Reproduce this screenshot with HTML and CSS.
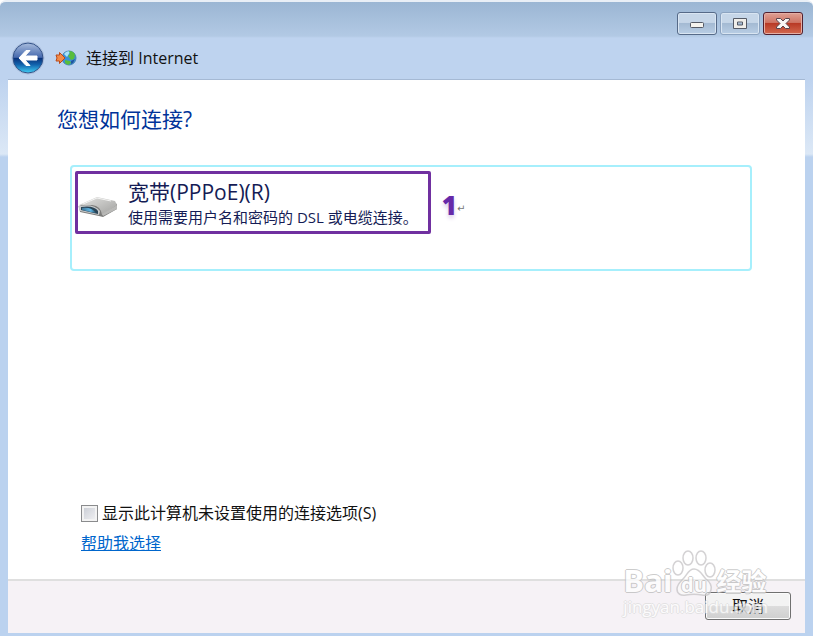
FILE: index.html
```html
<!DOCTYPE html>
<html lang="zh-CN">
<head>
	<meta charset="utf-8">
	<meta name="viewport" content="width=device-width, initial-scale=1">
	<title>连接到 Internet</title>
	<link rel="stylesheet" href="styles.css">
</head>
<body>
	<div class="window">
		<div class="titlebar">
			<button type="button" class="caption" aria-label="最小化">
				<svg width="16" height="14" viewBox="0 0 16 14"><rect x="1.5" y="5.500" width="13" height="5" rx="1" fill="#f5f3ee" stroke="#555a66"/></svg>
			</button>
			<button type="button" class="caption dim" aria-label="最大化">
				<svg width="16" height="14" viewBox="0 0 16 14"><path fill="#f0eeea" fill-rule="evenodd" stroke="#555a66" d="M1.500 1.500h13v10h-13zM5.500 5v3h5v-3z"/></svg>
			</button>
			<button type="button" class="caption close" aria-label="关闭">
				<svg width="16" height="14" viewBox="0 0 16 14"><path fill="#f8f6f4" stroke="#59444c" stroke-linejoin="round" d="M1.500 1.500h4L8 4l2.500-2.500h4V3L11 6.500l3.500 3.500v1.500h-4L8 9l-2.500 2.500h-4V10L5 6.500 1.500 3z"/></svg>
			</button>
		</div>

		<div class="header">
			<button type="button" class="back" aria-label="后退">
				<svg width="34" height="34" viewBox="0 0 34 34">
					<defs>
						<linearGradient id="ball" x1="0" y1="0" x2="0" y2="1">
							<stop offset="0" stop-color="#a9bddd"/>
							<stop offset=".48" stop-color="#4669ae"/>
							<stop offset=".5" stop-color="#092f78"/>
							<stop offset=".72" stop-color="#1263ad"/>
							<stop offset="1" stop-color="#43d0f5"/>
						</linearGradient>
					</defs>
					<circle cx="17" cy="17" r="16" fill="#dce6f4" stroke="#a5badb"/>
					<circle cx="17" cy="17" r="15" fill="url(#ball)" stroke="#315187"/>
					<path fill="#fff" stroke="#fff" stroke-linejoin="round" d="M8 17l7-7.500h4L14 15h12v4H14l5 5.500h-4z"/>
				</svg>
			</button>
			<svg class="globe" width="22" height="18" viewBox="0 0 22 18">
				<circle cx="14" cy="9" r="7" fill="#3b91d6" stroke="#4484b0"/>
				<path fill="#a9e3f8" d="M9 5q3-4 6-2l-3 5z"/>
				<path fill="#58bd3c" d="M14 2q5 0 6 4l-1 4-3 1-3-4 2-2zM10 11l5 1 1 2-3 2-3-2z"/>
				<path fill="#2255a0" d="M16 12l4-2-2 4-2 1z"/>
				<path fill="#f28a48" stroke="#b94a1b" stroke-linejoin="round" d="M1 6h3.500V3.500L10 9l-5.500 5.500V12H1l1-3z"/>
			</svg>
			<span class="caption-text">连接到 Internet</span>
		</div>

		<main class="content">
			<h1>您想如何连接?</h1>
			<div class="choice">
				<button type="button" class="option">
					<svg class="modem" width="40" height="24" viewBox="0 0 40 24">
						<defs>
							<linearGradient id="top" x1="0" y1="0" x2="1" y2="1">
								<stop offset="0" stop-color="#e4e4e2"/>
								<stop offset="1" stop-color="#a0a09e"/>
							</linearGradient>
							<linearGradient id="glass" x1="0" y1="0" x2="1" y2="0">
								<stop offset="0" stop-color="#3f7596"/>
								<stop offset=".6" stop-color="#61b8e6"/>
								<stop offset="1" stop-color="#22516d"/>
							</linearGradient>
						</defs>
						<path fill="#7c7c7a" d="M1 11L20 3l19 6v5L25 22l-4-1-19-4z"/>
						<path fill="url(#top)" d="M1 10L19 2l18 4 2 4-15 10q-1-9-10-10z"/>
						<path fill="#b9b9b7" d="M24 19l15-9v4l-14 7z"/>
						<path fill="#c9cbcc" d="M0 11q16-3 22 5l-1 4-19-4z"/>
						<path fill="#2b4557" d="M3 12q13-2 17 4v3L3 15z"/>
						<path fill="url(#glass)" d="M4 13q10-1 14 5L4 15z"/>
						<path fill="none" stroke="#f3f3f2" d="M5 9l14-6 14 3"/>
					</svg>
					<span class="label">
						<span class="name">宽带(PPPoE)(R)</span>
						<span class="desc">使用需要用户名和密码的 DSL 或电缆连接。</span>
					</span>
				</button>
				<span class="step">1</span>
				<span class="mark">↵</span>
			</div>
			<div class="more">
				<label class="check"><input type="checkbox">显示此计算机未设置使用的连接选项(S)</label>
				<a href="#">帮助我选择</a>
			</div>
		</main>

		<div class="footer">
			<button type="button" class="cancel">取消</button>
			<div class="watermark">
				<div class="brand">
					<span>Bai</span>
					<svg width="44" height="48" viewBox="0 0 44 48">
						<g fill="#fff" fill-opacity=".6" stroke="#c6c4c6" stroke-width="1.500">
							<ellipse cx="6" cy="19" rx="5" ry="7"/>
							<ellipse cx="16" cy="9" rx="5" ry="7"/>
							<ellipse cx="29" cy="9" rx="5" ry="7"/>
							<ellipse cx="38" cy="21" rx="5" ry="7"/>
							<path d="M22 20c6 0 8 6 12 10 4 3 6 7 5 11-1 5-5 6-9 5-6-1-10-1-16 0-5 1-9-1-9-6 0-4 2-6 5-9 5-4 6-11 12-11z"/>
						</g>
						<text x="22" y="43" text-anchor="middle" class="du">du</text>
					</svg>
					<span class="cn">经验</span>
				</div>
				<div class="site">jingyan.baidu.com</div>
			</div>
		</div>
	</div>
</body>
</html>
```
FILE: styles.css
```css
* {
	box-sizing: border-box;
}

body {
	margin: 0;
	background: #fff;
	color: #111;
	font-family: "Open Sans", "Noto Sans CJK SC", sans-serif;
	font-size: 16px;
	line-height: 20px;
}

button {
	font: inherit;
	padding: 0;
}

svg {
	display: block;
}

.window {
	display: flex;
	flex-direction: column;
	min-height: 100vh;
	padding: 0 8px 3px;
	border-top: 2px solid #e9eff6;
	border-radius: 6px 6px 0 0;
	background: linear-gradient(#9bb6d3 0, #b2c9e4 34px, #bed3ef 36px, #bed3ef 78px, #dce8f6 152px, #bbd2ef 155px);
}

.titlebar {
	display: flex;
	justify-content: flex-end;
	gap: 3px;
	height: 35px;
	padding: 10px 2px 0 0;
}

.caption {
	display: flex;
	align-items: center;
	justify-content: center;
	width: 40px;
	height: 23px;
	border: 1px solid #566a88;
	border-radius: 3px;
	background: linear-gradient(#c6d6e8 0 45%, #a4bad3 50%, #b9cee5);
	box-shadow: inset 0 0 0 1px #d9e5f2;
}

.dim {
	border-color: #8ca3c0;
}

.close {
	border-color: #52202f;
	background: linear-gradient(#dfa094, #cf7565 45%, #b93a26 50%, #d3694f);
	box-shadow: inset 0 0 0 1px #e5aea4;
}

.header {
	display: flex;
	align-items: center;
	height: 43px;
	padding-left: 3px;
	border-bottom: 1px solid #a5b9d4;
}

.back {
	border: 0;
	background: none;
}

.globe {
	margin: 0 9px 0 10px;
}

.content {
	flex: 1;
	display: flex;
	flex-direction: column;
	padding: 24px 53px 26px 49px;
	background: #fff;
}

h1 {
	margin: 0 0 31px;
	color: #003399;
	font-size: 21px;
	font-weight: 400;
	line-height: 30px;
}

.choice {
	display: flex;
	align-items: flex-start;
	min-height: 106px;
	margin-left: 13px;
	padding: 4px 3px;
	border: 2px solid #a6effc;
	border-radius: 4px;
}

.option {
	display: flex;
	align-items: center;
	height: 63px;
	padding: 0 10px 0 0;
	border: 3px solid #7030a0;
	border-radius: 2px;
	background: #fff;
	color: #151c55;
	text-align: left;
}

.modem {
	margin: 8px 10px 0 0;
}

.label {
	display: flex;
	flex-direction: column;
}

.name {
	font-size: 21px;
	line-height: 28px;
}

.desc {
	font-size: 15px;
	line-height: 22px;
	white-space: nowrap;
}

.step {
	margin: 20px 0 0 11px;
	color: #6629a8;
	font-size: 26px;
	font-weight: 800;
	line-height: 28px;
	text-shadow: 0 3px 4px #d9cbe8;
}

.mark {
	margin-top: 28px;
	color: #777;
	font-family: "DejaVu Sans", sans-serif;
	font-size: 10px;
}

.more {
	display: flex;
	flex-direction: column;
	align-items: flex-start;
	gap: 10px;
	margin: auto 0 0 24px;
}

.check {
	display: flex;
	align-items: center;
	gap: 4px;
}

.check input {
	appearance: none;
	width: 17px;
	height: 17px;
	margin: 0;
	border: 1px solid #8a8b8d;
	background: linear-gradient(135deg, #c6cad2, #f4f4f6);
	box-shadow: inset 0 0 0 2px #f3f3f3;
}

a {
	color: #0066cc;
}

.footer {
	position: relative;
	display: flex;
	justify-content: flex-end;
	padding: 11px 14px 13px;
	border-top: 2px solid #dfdfdf;
	background: #f6f2f6;
}

.cancel {
	width: 86px;
	height: 28px;
	border: 1px solid #707070;
	border-radius: 3px;
	background: linear-gradient(#f3f3f3 0 48%, #dcdcdc 52%, #cfcfcf);
	box-shadow: inset 0 0 0 1px #fbfbfb;
	color: #111;
}

/* translucent site stamp over the corner */
.watermark {
	position: absolute;
	right: 37px;
	bottom: 16px;
	color: #fff;
	opacity: 0.75;
	pointer-events: none;
	text-shadow: 1px 0 #bbb, -1px 0 #bbb, 0 1px #bbb, 0 -1px #bbb;
}

.brand {
	display: flex;
	align-items: flex-end;
	font-size: 31px;
	font-weight: 700;
	line-height: 34px;
}

.brand .cn {
	font-size: 25px;
	line-height: 32px;
}

.du {
	fill: #fff;
	font-size: 20px;
}

.site {
	font-size: 17px;
	line-height: 20px;
	text-shadow: 1px 0 #ddd, -1px 0 #ddd, 0 1px #ddd, 0 -1px #ddd;
}
```
